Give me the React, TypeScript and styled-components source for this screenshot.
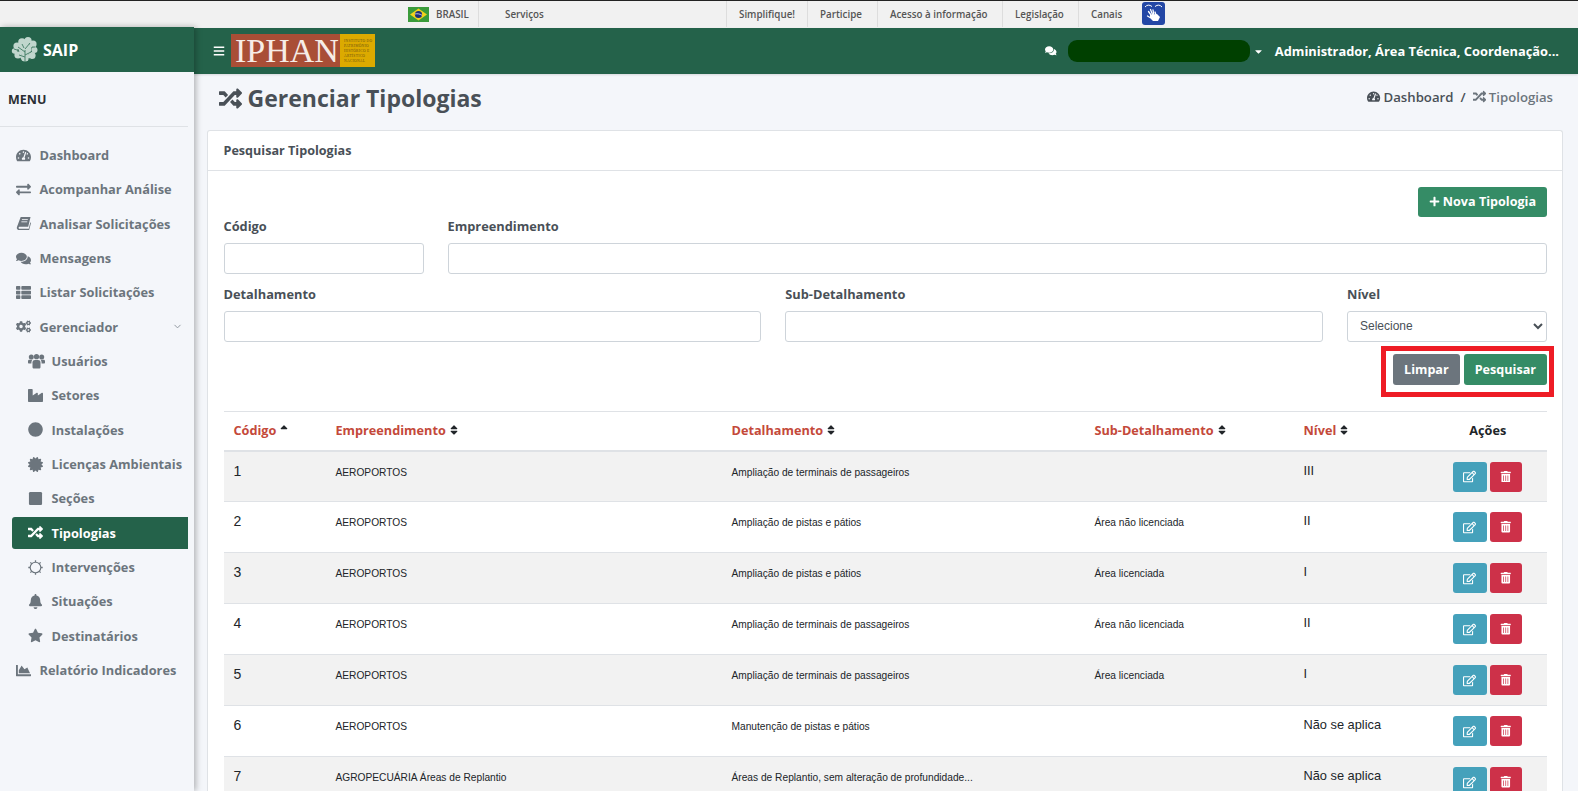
import React from "react";
import styled, { createGlobalStyle } from "styled-components";
import {
  FaTachometerAlt, FaExchangeAlt, FaComments, FaThList, FaCogs, FaIndustry,
  FaCircle, FaCertificate, FaSquare, FaRandom, FaBell, FaStar, FaChartArea,
  FaBars, FaCaretDown, FaPlus, FaSort, FaSortUp, FaRegEdit, FaTrashAlt,
} from "react-icons/fa";
import { ChevronDown } from "lucide-react";

const Global = createGlobalStyle`
  html, body { margin: 0; padding: 0; height: 791px; overflow: hidden; background: #f4f6fa; }
  * { box-sizing: border-box; }
  body { font-family: "Open Sans", "Liberation Sans", sans-serif; }
`;

const Page = styled.div`
  width: 1578px;
  height: 791px;
  overflow: hidden;
  display: flex;
  flex-direction: column;
`;

const TopBar = styled.div`
  height: 28px;
  flex: none;
  display: flex;
  align-items: stretch;
  background: #f1f1f1;
  border-top: 1px solid #222;
  padding-left: 408px;
  font-size: 9.8px;
  font-weight: 600;
  color: #555;
`;
const BrazilItem = styled.div`
  width: 71px;
  display: flex;
  align-items: center;
  gap: 7px;
  margin: 0 0 1px;
  border-right: 1px solid #ddd;
`;
const TopSpacer = styled.div`
  width: 248px;
  padding-left: 26px;
  display: flex;
  align-items: center;
  border-right: 1px solid #ddd;
  margin-bottom: 1px;
`;
const TopLink = styled.div<{ $w: number; $last?: boolean }>`
  width: ${(p) => p.$w}px;
  padding-left: 12px;
  display: flex;
  align-items: center;
  border-right: ${(p) => (p.$last ? "0" : "1px solid #ddd")};
  margin-bottom: 1px;
`;
const LibrasBadge = styled.div`
  width: 23px;
  height: 23px;
  margin: 1px 0 0 13px;
  display: flex;
`;

const Body = styled.div`
  flex: 1;
  display: flex;
  min-height: 0;
`;

const Sidebar = styled.aside`
  width: 194px;
  flex: none;
  background: #f4f6fa;
  box-shadow: 2px 0 6px rgba(0, 0, 0, 0.28);
  position: relative;
  z-index: 3;
  margin-top: -1px;
`;
const Brand = styled.div`
  height: 45px;
  background: #24624a;
  display: flex;
  align-items: center;
  gap: 5px;
  padding-left: 11px;
  color: #fff;
  font-size: 16px;
  font-weight: 700;
`;
const MenuTitle = styled.div`
  height: 55px;
  margin-right: 6px;
  padding: 20px 0 0 8px;
  font-size: 12.5px;
  font-weight: 700;
  color: #2b2f33;
  border-bottom: 1px solid #dfe2e6;
  line-height: 16px;
`;
const Nav = styled.nav`
  padding-top: 11px;
`;
const NavItem = styled.div<{ $sub?: boolean; $active?: boolean }>`
  height: ${(p) => (p.$active ? "32px" : "34.33px")};
  margin: ${(p) => (p.$active ? "1.165px 6px 1.165px 12px" : "0 6px 0 0")};
  padding-left: ${(p) => (p.$active ? "16px" : p.$sub ? "28px" : "16px")};
  display: flex;
  align-items: center;
  font-size: 12.8px;
  font-weight: 700;
  color: ${(p) => (p.$active ? "#fff" : "#6c757d")};
  background: ${(p) => (p.$active ? "#24624a" : "transparent")};
  border-radius: ${(p) => (p.$active ? "3px 0 0 3px" : "0")};
`;
const NavIcon = styled.span`
  width: 23.5px;
  flex: none;
  display: flex;
  align-items: center;
  font-size: 15px;
`;
const NavChevron = styled.span`
  margin-left: auto;
  margin-right: 5px;
  display: flex;
  color: #8a9299;
`;

const Main = styled.main`
  flex: 1;
  min-width: 0;
  display: flex;
  flex-direction: column;
`;
const Header = styled.header`
  height: 46px;
  flex: none;
  background: #24624a;
  display: flex;
  align-items: center;
  color: #fff;
  padding: 0 19px 0 19px;
  box-shadow: 0 1px 2px rgba(0, 0, 0, 0.12);
`;
const Burger = styled.span`
  font-size: 12px;
  display: flex;
  width: 18px;
`;
const Logo = styled.div`
  display: flex;
  height: 33px;
  margin-bottom: 1px;
`;
const LogoRed = styled.div`
  width: 109px;
  background: #a94e36;
  color: #f6ece6;
  font-family: "Liberation Serif", serif;
  font-size: 34px;
  line-height: 33px;
  padding-left: 4px;
  white-space: nowrap;
`;
const LogoGold = styled.div`
  width: 35px;
  background: #dcaa00;
  color: #6b5210;
  font-family: "Liberation Serif", serif;
  font-size: 3.6px;
  line-height: 5px;
  padding: 5px 0 0 4px;
  letter-spacing: 0.3px;
  white-space: pre-line;
`;
const HeaderRight = styled.div`
  margin-left: auto;
  display: flex;
  align-items: center;
  font-size: 12.85px;
  font-weight: 700;
`;
const Chat = styled.span`
  font-size: 11.5px;
  display: flex;
  margin-right: 11px;
`;
const Redacted = styled.div`
  width: 182px;
  height: 22px;
  border-radius: 9px;
  background: #004000;
`;
const Caret = styled.span`
  display: flex;
  font-size: 11px;
  margin: 0 11px 0 3px;
`;

const Content = styled.div`
  flex: 1;
  min-height: 0;
  padding: 0 15px 0 12.5px;
`;
const TitleRow = styled.div`
  height: 56px;
  display: flex;
  align-items: center;
  padding: 0 10px 0 12px;
  justify-content: space-between;
`;
const Title = styled.h1`
  margin: 0 0 8px;
  display: flex;
  align-items: center;
  gap: 6px;
  font-size: 23px;
  font-weight: 700;
  color: #495057;
`;
const Breadcrumb = styled.div`
  display: flex;
  align-items: center;
  gap: 3px;
  font-size: 13.2px;
  font-weight: 600;
  color: #495057;
  margin-bottom: 11px;
`;
const Crumb = styled.span<{ $muted?: boolean }>`
  display: flex;
  align-items: center;
  gap: 3px;
  color: ${(p) => (p.$muted ? "#6c757d" : "#495057")};
`;
const Slash = styled.span`
  margin: 0 4px;
`;

const Card = styled.section`
  background: #fff;
  border: 1px solid #dfe2e6;
  border-bottom: 0;
  border-radius: 3px 3px 0 0;
  height: 700px;
`;
const CardHeader = styled.div`
  height: 40px;
  display: flex;
  align-items: center;
  padding-left: 16px;
  font-size: 12.6px;
  font-weight: 700;
  color: #495057;
  border-bottom: 1px solid #dfe2e6;
`;
const CardBody = styled.div`
  padding: 15.5px 15px 0 16px;
`;
const ActionRow = styled.div`
  display: flex;
  justify-content: flex-end;
`;
const Button = styled.button<{ $bg: string; $h: number; $px: number }>`
  height: ${(p) => p.$h}px;
  border: 0;
  border-radius: 3px;
  background: ${(p) => p.$bg};
  color: #fff;
  font-family: inherit;
  font-size: 12.6px;
  font-weight: 700;
  padding: 0 ${(p) => p.$px}px;
  display: inline-flex;
  align-items: center;
  justify-content: center;
  gap: 3px;
`;
const FormRow = styled.div<{ $cols: string; $top: number }>`
  display: grid;
  grid-template-columns: ${(p) => p.$cols};
  column-gap: 24px;
  margin-top: ${(p) => p.$top}px;
`;
const Field = styled.div`
  display: flex;
  flex-direction: column;
`;
const Label = styled.label`
  font-size: 12.8px;
  font-weight: 700;
  color: #495057;
  height: 17px;
  line-height: 17px;
  margin-bottom: 8px;
`;
const Input = styled.input`
  height: 31px;
  width: 100%;
  border: 1px solid #ced4da;
  border-radius: 3px;
  background: #fff;
`;
const Select = styled.select`
  height: 31px;
  width: 100%;
  border: 1px solid #ced4da;
  border-radius: 3px;
  background: #fff;
  color: #495057;
  font-family: "Liberation Sans", sans-serif;
  font-size: 12px;
  padding-left: 8px;
`;
const SearchRow = styled.div`
  display: flex;
  justify-content: flex-end;
  margin-top: 12px;
`;
const SearchGroup = styled.div`
  position: relative;
  display: flex;
  gap: 4px;
`;
const Highlight = styled.div`
  position: absolute;
  inset: -8px -7px -12px -12px;
  border: 5px solid #ee1c25;
  pointer-events: none;
`;
const Table = styled.table`
  width: 100%;
  margin-top: 26px;
  border-collapse: collapse;
  table-layout: fixed;
  border-top: 1px solid #dfe2e6;
`;
const Th = styled.th<{ $center?: boolean }>`
  height: 39.5px;
  padding: 0 0 1px ${(p) => (p.$center ? "14px" : "10px")};
  text-align: ${(p) => (p.$center ? "center" : "left")};
  font-size: 12.7px;
  font-weight: 700;
  color: ${(p) => (p.$center ? "#212529" : "#c4493a")};
  border-bottom: 2px solid #dfe2e6;
`;
const SortIcon = styled.span`
  color: #212529;
  font-size: 12px;
  margin-left: 2px;
  vertical-align: -1px;
`;
const Tr = styled.tr`
  height: 51px;
  &:nth-child(odd) { background: #f2f2f2; }
`;
const Td = styled.td`
  padding: 10px 0 0 10px;
  vertical-align: top;
  font-family: "Liberation Sans", sans-serif;
  font-size: 10.2px;
  line-height: 21px;
  color: #212529;
  border-bottom: 1px solid #dfe2e6;
`;
const TdCode = styled(Td)`
  padding-top: 11px;
  font-size: 14px;
  line-height: 16px;
`;
const TdLevel = styled(Td)`
  padding-top: 11px;
  font-size: 12.8px;
  line-height: 16px;
`;
const TdActions = styled(Td)`
  padding: 10px 0 0 38px;
`;
const Actions = styled.div`
  display: flex;
  gap: 3px;
`;
const IconButton = styled.button<{ $bg: string; $w: number; $size: number }>`
  width: ${(p) => p.$w}px;
  height: 30px;
  border: 0;
  border-radius: 3px;
  background: ${(p) => p.$bg};
  color: #fff;
  font-size: ${(p) => p.$size}px;
  display: flex;
  align-items: center;
  justify-content: center;
  padding: 0;
`;

const SaipTree = () => (
  <svg width="27" height="27" viewBox="0 0 27 27">
    <g fill="#dcebe4" opacity="0.85">
      <circle cx="6" cy="10" r="3.6" />
      <circle cx="3.6" cy="15" r="2.8" />
      <circle cx="7" cy="19" r="3.6" />
      <circle cx="11" cy="6" r="3.8" />
      <circle cx="17" cy="4.5" r="3.6" />
      <circle cx="22" cy="8" r="3.6" />
      <circle cx="23.5" cy="14" r="3" />
      <circle cx="21" cy="19.5" r="3.6" />
      <circle cx="14" cy="13" r="6.5" />
      <circle cx="14" cy="21" r="4.5" />
    </g>
    <path
      d="M14 26V14M14 16L7 11M14 13L19 7M14 19L20 16M14 21L8 19M11 8L13 12M3 13L6 14M21 11L24 11M17 23L20 23"
      stroke="#3f7a63"
      strokeWidth="0.9"
      fill="none"
    />
  </svg>
);

const Flag = () => (
  <svg width="21" height="15" viewBox="0 0 21 15">
    <rect width="21" height="15" fill="#3a9b3a" />
    <path d="M10.5 1.5L19 7.5L10.5 13.5L2 7.5Z" fill="#f2d21c" />
    <circle cx="10.5" cy="7.5" r="3.6" fill="#1f2f78" />
    <path d="M7 7c2-.6 5-.2 7 1.3" stroke="#fff" strokeWidth=".7" fill="none" />
  </svg>
);

const LibrasIcon = () => (
  <svg width="23" height="23" viewBox="0 0 23 23">
    <rect width="23" height="23" rx="3" fill="#2347a5" />
    <path d="M3 5Q6 1.5 10 4.5M20 5Q17 1.5 13 4.5" stroke="#fff" strokeWidth="1" fill="none" />
    <path
      d="M6.5 9.5L9 13M8.5 7.5L10.5 12.5M11 8L11.8 12.5M13 10L14 13M8 15.5L5.5 14"
      stroke="#fff"
      strokeWidth="1.3"
      strokeLinecap="round"
      fill="none"
    />
    <path d="M8 13L15 12L18 15L16 19L11 19L8 16Z" fill="#fff" />
  </svg>
);

const BookIcon = () => (
  <svg width="15" height="15" viewBox="0 0 16 16" fill="currentColor">
    <path d="M5 1H15.5L13 11.5H4.2C3.2 11.5 2.7 12.1 2.8 12.7 2.9 13.3 3.4 13.6 4 13.6H13.6L15.3 6.6 16 7.4 14 15H3.6C1.7 15 .6 13.6 .9 11.9Z" />
    <path d="M6.3 3.8H12.6M5.7 6.2H12" stroke="#f4f6fa" strokeWidth="0.9" />
  </svg>
);

const UsersIcon = () => (
  <svg width="17" height="15" viewBox="0 0 17 15" fill="currentColor">
    <circle cx="3.3" cy="3" r="2.5" />
    <circle cx="8.5" cy="2.7" r="2.6" />
    <circle cx="13.7" cy="3" r="2.5" />
    <path d="M4.5 8.5C4.5 6.8 5.6 6 7 6H10C11.4 6 12.5 6.8 12.5 8.5V13C12.5 14 11.8 14.5 11 14.5H6C5.2 14.5 4.5 14 4.5 13Z" />
    <path d="M0 7.2C0 6 .8 5.8 1.5 5.8H4.6C3.6 6.5 3.4 7.5 3.4 9.6H1C.4 9.6 0 9.2 0 8.6ZM17 7.2C17 6 16.2 5.8 15.5 5.8H12.4C13.4 6.5 13.6 7.5 13.6 9.6H16C16.6 9.6 17 9.2 17 8.6Z" />
  </svg>
);

const RingIcon = () => (
  <svg width="15" height="15" viewBox="0 0 15 15" fill="none" stroke="currentColor">
    <circle cx="7.5" cy="7.5" r="5.3" strokeWidth="1.1" />
    <path
      d="M7.5 .3V2M7.5 13V14.7M.3 7.5H2M13 7.5H14.7M2.4 2.4L3.6 3.6M11.4 11.4L12.6 12.6M2.4 12.6L3.6 11.4M11.4 3.6L12.6 2.4"
      strokeWidth="1.3"
    />
  </svg>
);

const menu = [
  { label: "Dashboard", icon: <FaTachometerAlt /> },
  { label: "Acompanhar Análise", icon: <FaExchangeAlt /> },
  { label: "Analisar Solicitações", icon: <BookIcon /> },
  { label: "Mensagens", icon: <FaComments /> },
  { label: "Listar Solicitações", icon: <FaThList /> },
  { label: "Gerenciador", icon: <FaCogs />, chevron: true },
  { label: "Usuários", icon: <UsersIcon />, sub: true },
  { label: "Setores", icon: <FaIndustry />, sub: true },
  { label: "Instalações", icon: <FaCircle />, sub: true },
  { label: "Licenças Ambientais", icon: <FaCertificate />, sub: true },
  { label: "Seções", icon: <FaSquare />, sub: true },
  { label: "Tipologias", icon: <FaRandom />, sub: true, active: true },
  { label: "Intervenções", icon: <RingIcon />, sub: true },
  { label: "Situações", icon: <FaBell />, sub: true },
  { label: "Destinatários", icon: <FaStar />, sub: true },
  { label: "Relatório Indicadores", icon: <FaChartArea /> },
];

const rows = [
  ["1", "AEROPORTOS", "Ampliação de terminais de passageiros", "", "III"],
  ["2", "AEROPORTOS", "Ampliação de pistas e pátios", "Área não licenciada", "II"],
  ["3", "AEROPORTOS", "Ampliação de pistas e pátios", "Área licenciada", "I"],
  ["4", "AEROPORTOS", "Ampliação de terminais de passageiros", "Área não licenciada", "II"],
  ["5", "AEROPORTOS", "Ampliação de terminais de passageiros", "Área licenciada", "I"],
  ["6", "AEROPORTOS", "Manutenção de pistas e pátios", "", "Não se aplica"],
  ["7", "AGROPECUÁRIA Áreas de Replantio", "Áreas de Replantio, sem alteração de profundidade...", "", "Não se aplica"],
];

const columns = [
  { label: "Código", w: 102, up: true },
  { label: "Empreendimento", w: 396 },
  { label: "Detalhamento", w: 363 },
  { label: "Sub-Detalhamento", w: 209 },
  { label: "Nível", w: 121 },
];

export default function App() {
  return (
    <Page>
      <Global />
      <TopBar>
        <BrazilItem><Flag />BRASIL</BrazilItem>
        <TopSpacer>Serviços</TopSpacer>
        <TopLink $w={81}>Simplifique!</TopLink>
        <TopLink $w={70}>Participe</TopLink>
        <TopLink $w={125}>Acesso à informação</TopLink>
        <TopLink $w={76}>Legislação</TopLink>
        <TopLink $w={50} $last>Canais</TopLink>
        <LibrasBadge><LibrasIcon /></LibrasBadge>
      </TopBar>
      <Body>
        <Sidebar>
          <Brand><SaipTree />SAIP</Brand>
          <MenuTitle>MENU</MenuTitle>
          <Nav>
            {menu.map((m) => (
              <NavItem key={m.label} $sub={m.sub} $active={m.active}>
                <NavIcon>{m.icon}</NavIcon>
                {m.label}
                {m.chevron && <NavChevron><ChevronDown size={11} /></NavChevron>}
              </NavItem>
            ))}
          </Nav>
        </Sidebar>
        <Main>
          <Header>
            <Burger><FaBars /></Burger>
            <Logo>
              <LogoRed>IPHAN</LogoRed>
              <LogoGold>{"INSTITUTO DO\nPATRIMÔNIO\nHISTÓRICO E\nARTÍSTICO\nNACIONAL"}</LogoGold>
            </Logo>
            <HeaderRight>
              <Chat><FaComments /></Chat>
              <Redacted />
              <Caret><FaCaretDown /></Caret>
              Administrador, Área Técnica, Coordenação...
            </HeaderRight>
          </Header>
          <Content>
            <TitleRow>
              <Title><FaRandom />Gerenciar Tipologias</Title>
              <Breadcrumb>
                <Crumb><FaTachometerAlt />Dashboard</Crumb>
                <Slash>/</Slash>
                <Crumb $muted><FaRandom />Tipologias</Crumb>
              </Breadcrumb>
            </TitleRow>
            <Card>
              <CardHeader>Pesquisar Tipologias</CardHeader>
              <CardBody>
                <ActionRow>
                  <Button $bg="#358c66" $h={30} $px={11}><FaPlus size={11} />Nova Tipologia</Button>
                </ActionRow>
                <FormRow $cols="200px 1fr" $top={1}>
                  <Field><Label>Código</Label><Input /></Field>
                  <Field><Label>Empreendimento</Label><Input /></Field>
                </FormRow>
                <FormRow $cols="1fr 1fr 200px" $top={12}>
                  <Field><Label>Detalhamento</Label><Input /></Field>
                  <Field><Label>Sub-Detalhamento</Label><Input /></Field>
                  <Field>
                    <Label>Nível</Label>
                    <Select defaultValue=""><option value="">Selecione</option></Select>
                  </Field>
                </FormRow>
                <SearchRow>
                  <SearchGroup>
                    <Button $bg="#6c757d" $h={31} $px={11}>Limpar</Button>
                    <Button $bg="#358c66" $h={31} $px={11}>Pesquisar</Button>
                    <Highlight />
                  </SearchGroup>
                </SearchRow>
                <Table>
                  <colgroup>
                    {columns.map((c) => <col key={c.label} style={{ width: c.w }} />)}
                    <col />
                  </colgroup>
                  <thead>
                    <tr>
                      {columns.map((c) => (
                        <Th key={c.label}>
                          {c.label}
                          <SortIcon>{c.up ? <FaSortUp /> : <FaSort />}</SortIcon>
                        </Th>
                      ))}
                      <Th $center>Ações</Th>
                    </tr>
                  </thead>
                  <tbody>
                    {rows.map((r) => (
                      <Tr key={r[0]}>
                        <TdCode>{r[0]}</TdCode>
                        <Td>{r[1]}</Td>
                        <Td>{r[2]}</Td>
                        <Td>{r[3]}</Td>
                        <TdLevel>{r[4]}</TdLevel>
                        <TdActions>
                          <Actions>
                            <IconButton $bg="#45a1bb" $w={34} $size={13}><FaRegEdit /></IconButton>
                            <IconButton $bg="#cd3149" $w={32} $size={11.5}><FaTrashAlt /></IconButton>
                          </Actions>
                        </TdActions>
                      </Tr>
                    ))}
                  </tbody>
                </Table>
              </CardBody>
            </Card>
          </Content>
        </Main>
      </Body>
    </Page>
  );
}
